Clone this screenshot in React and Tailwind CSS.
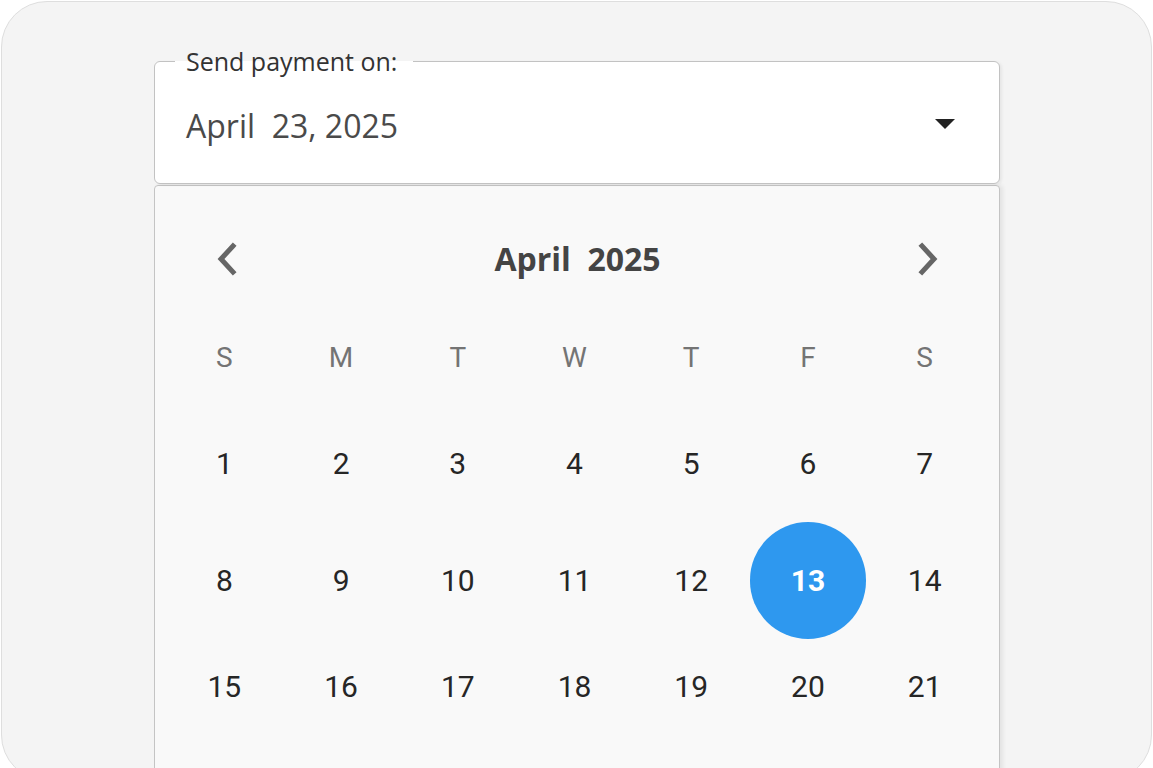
import React from "react";

const weekdays = ["S", "M", "T", "W", "T", "F", "S"];

const weeks = [
  { h: "h-[117px]", days: [1, 2, 3, 4, 5, 6, 7] },
  { h: "h-[117px]", days: [8, 9, 10, 11, 12, 13, 14] },
  { h: "h-[95px]", days: [15, 16, 17, 18, 19, 20, 21] },
];

const selected = 13;

const Chevron = ({ dir }) => (
  <svg width="22" height="34" viewBox="0 0 22 34" fill="none">
    <path
      d={dir === "left" ? "M17 4 L5 17 L17 30" : "M5 4 L17 17 L5 30"}
      stroke="#666"
      strokeWidth="5"
      strokeLinecap="square"
      strokeLinejoin="miter"
    />
  </svg>
);

export default function App() {
  return (
    <div className="w-[1153px] h-[768px] bg-white p-px overflow-hidden">
      <div className="h-[780px] rounded-[46px] border border-[#dedede] bg-[#f4f4f4] overflow-hidden pt-[59px] pl-[152px] pr-[151px]">
        {/* date field */}
        <div className="relative h-[123px] rounded-[6px] border border-[#c2c2c2] bg-white flex items-center justify-between pl-[31px] pr-[44px] shadow-[2px_1px_3px_rgba(0,0,0,0.06)]">
          <span className="absolute left-[20px] top-[-16px] pl-[11px] pr-[16px] text-[25px] leading-[30px] text-[#333] font-['Open_Sans',sans-serif] bg-[linear-gradient(to_bottom,#f4f4f4_50%,#ffffff_50%)]">
            Send payment on:
          </span>
          <span className="text-[32px] text-[#4a4a4a] font-['Open_Sans',sans-serif] whitespace-pre mt-[6px]">
            April  23, 2025
          </span>
          <svg width="20" height="10" viewBox="0 0 20 10" className="mt-[2px]">
            <path d="M0 0 H20 L10 10 Z" fill="#222" />
          </svg>
        </div>

        {/* calendar panel */}
        <div className="mt-px rounded-t-[4px] border border-[#c4c4c4] bg-[#f9f9f9] shadow-[3px_0_4px_rgba(0,0,0,0.07)] pl-[11px] pr-[16px] pb-[120px]">
          <div className="flex items-center justify-between h-[148px] pl-[50px] pr-[44px] pb-[2px]">
            <Chevron dir="left" />
            <span className="text-[32px] font-bold text-[#444] font-['Open_Sans',sans-serif] whitespace-pre">
              April  2025
            </span>
            <Chevron dir="right" />
          </div>
          <div className="grid grid-cols-7 h-[48px] items-center font-['Roboto',sans-serif] text-[28px] text-[#747474]">
            {weekdays.map((d, i) => (
              <div key={i} className="text-center">
                {d}
              </div>
            ))}
          </div>
          <div className="pt-[23px]">
            {weeks.map((w, wi) => (
              <div key={wi} className={`grid grid-cols-7 items-center ${w.h}`}>
                {w.days.map((d) => (
                  <div key={d} className="flex justify-center">
                    {d === selected ? (
                      <div className="w-[117px] h-[117px] rounded-full bg-[#2e98ef] flex items-center justify-center text-white font-bold text-[30px] font-['Roboto',sans-serif]">
                        {d}
                      </div>
                    ) : (
                      <span className="font-['Roboto',sans-serif] text-[30px] text-[#262626]">
                        {d}
                      </span>
                    )}
                  </div>
                ))}
              </div>
            ))}
          </div>
        </div>
      </div>
    </div>
  );
}
